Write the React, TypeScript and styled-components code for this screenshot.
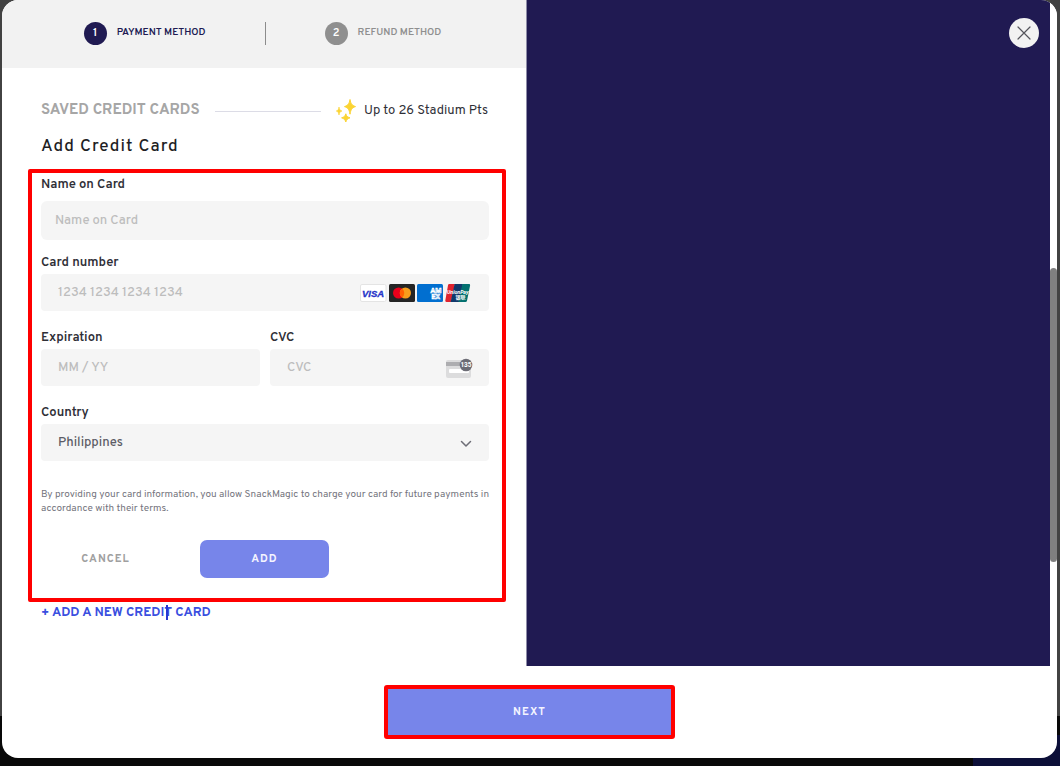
import React from 'react';
import styled, { createGlobalStyle } from 'styled-components';

const navy = '#201a52';
const periwinkle = '#7785ea';
const red = '#ff0000';

const GlobalStyle = createGlobalStyle`
  *, *::before, *::after { box-sizing: border-box; }
  body {
    margin: 0;
    font-family: Overpass, Roboto, 'Liberation Sans', sans-serif;
    color: #2f2f37;
  }
  button, input, select { font: inherit; color: inherit; }
`;

const Backdrop = styled.div`
  min-height: 100vh;
  display: flex;
  padding: 0 3px 8px 2px;
  background:
    linear-gradient(#0c0f38, #0c0f38) right bottom / 87px 31px no-repeat,
    linear-gradient(#080808, #080808) left bottom / 100% 50px no-repeat,
    #424242;
`;

const Modal = styled.main`
  flex: 1;
  display: flex;
  flex-direction: column;
  border-radius: 16px;
  overflow: hidden;
  background: #fff;
`;

const Body = styled.div`
  flex: 1;
  display: grid;
  grid-template-columns: minmax(0, 1fr) minmax(0, 1fr) 7px;
`;

const PaymentColumn = styled.section`
  display: flex;
  flex-direction: column;
`;

const Steps = styled.ol`
  list-style: none;
  margin: 0;
  padding: 0 3px 2px 0;
  height: 68px;
  display: flex;
  align-items: center;
  justify-content: center;
  gap: 59px;
  background: #f2f2f2;
`;

const Step = styled.li<{ $active?: boolean }>`
  display: flex;
  align-items: center;
  gap: 10px;
  font-size: 10px;
  font-weight: 600;
  line-height: 16px;
  white-space: nowrap;
  color: ${(p) => (p.$active ? navy : '#8f8f8f')};
`;

const StepNumber = styled.span<{ $active?: boolean }>`
  width: 23px;
  height: 23px;
  border-radius: 50%;
  display: grid;
  place-items: center;
  font-size: 11px;
  color: #fff;
  background: ${(p) => (p.$active ? navy : '#8f8f8f')};
`;

const StepDivider = styled.li`
  width: 1px;
  height: 23px;
  background: #8c8c8c;
`;

const Content = styled.div`
  padding: 33px 20px 0 26px;
`;

const SavedRow = styled.div`
  display: flex;
  align-items: center;
  padding: 0 18px 0 13px;
  height: 20px;
`;

const SavedTitle = styled.h2`
  margin: 0;
  font-size: 15px;
  line-height: 20px;
  font-weight: 700;
  color: #a6a6a6;
`;

const Rule = styled.span`
  flex: 1;
  height: 1px;
  margin: 0 15px;
  background: #dcdce6;
`;

const Points = styled.span`
  display: flex;
  align-items: center;
  gap: 8px;
  font-size: 13px;
  line-height: 20px;
`;

const FormTitle = styled.h1`
  margin: 15px 0 0;
  padding: 0 13px;
  font-size: 17px;
  line-height: 22px;
  font-weight: 500;
  letter-spacing: 1px;
  color: #1e1e24;
`;

const CardForm = styled.form`
  margin-top: 11px;
  padding: 4px 13px 20px 9px;
  border: 4px solid ${red};
  border-radius: 2px;
`;

const Field = styled.div<{ $gap?: number }>`
  display: flex;
  flex-direction: column;
  gap: ${(p) => p.$gap ?? 3}px;
  flex: 1;
  min-width: 0;
`;

const Label = styled.label`
  font-size: 13px;
  line-height: 16px;
  font-weight: 600;
`;

const Row = styled.div`
  display: flex;
  gap: 10px;
  margin-top: 19px;
`;

const FirstRow = styled(Row)`
  margin-top: 15px;
`;

const Control = styled.div<{ $tall?: boolean }>`
  position: relative;
  display: flex;
  align-items: center;
  height: ${(p) => (p.$tall ? 39 : 37)}px;
  padding: 0 18px 0 ${(p) => (p.$tall ? 14 : 17)}px;
  border-radius: ${(p) => (p.$tall ? 6 : 4)}px;
  background: #f5f5f5;
`;

const TextInput = styled.input`
  flex: 1;
  min-width: 0;
  height: 100%;
  padding: 0;
  border: 0;
  outline: 0;
  background: none;
  font-size: 13px;
  font-weight: 500;
  &::placeholder { color: #bdbdbd; opacity: 1; }
`;

const CountrySelect = styled.select`
  flex: 1;
  height: 100%;
  padding: 0;
  border: 0;
  outline: 0;
  appearance: none;
  background: none;
  font-size: 13px;
  font-weight: 500;
  color: #5c5c66;
`;

const Brands = styled.span`
  display: flex;
  gap: 2px;
`;

const Terms = styled.p`
  margin: 27px 0 0;
  font-size: 10px;
  line-height: 14px;
  color: #75757e;
`;

const Actions = styled.div`
  display: flex;
  gap: 30px;
  margin-top: 24px;
`;

const Button = styled.button<{ $primary?: boolean }>`
  width: 129px;
  height: 38px;
  border: 0;
  border-radius: 7px;
  padding: 0;
  font-size: 11px;
  font-weight: 700;
  letter-spacing: 1px;
  color: ${(p) => (p.$primary ? '#f4f4ff' : '#a0a0a0')};
  background: ${(p) => (p.$primary ? periwinkle : 'none')};
`;

const AddCardLink = styled.a`
  position: relative;
  display: inline-block;
  margin: 0 0 0 13px;
  font-size: 13px;
  line-height: 18px;
  font-weight: 700;
  color: #3a4fdf;
  text-decoration: none;
`;

const Caret = styled.span`
  position: absolute;
  left: 125px;
  top: 1px;
  width: 2px;
  height: 15px;
  background: #2638d2;
`;

const SidePanel = styled.aside`
  display: flex;
  justify-content: flex-end;
  align-items: flex-start;
  padding: 18px 11px;
  border-left: 1px solid #8e8ca8;
  background: ${navy};
`;

const CloseButton = styled.button`
  width: 30px;
  height: 30px;
  padding: 0;
  border: 0;
  border-radius: 50%;
  display: grid;
  place-items: center;
  background: #f2f2f2;
`;

const ScrollTrack = styled.div`
  display: flex;
  flex-direction: column;
  background: #fff;
  &::before { content: ''; flex: 268; }
  &::after { content: ''; flex: 104; }
`;

const ScrollThumb = styled.div`
  flex: 294;
  border-radius: 4px;
  background: #808080;
`;

const Footer = styled.footer`
  height: 92px;
  display: flex;
  justify-content: center;
  align-items: center;
`;

const NextButton = styled(Button)`
  width: 291px;
  height: 54px;
  border: 4px solid ${red};
  border-radius: 3px;
`;

const Sparkles = () => (
  <svg width="20" height="24" viewBox="0 0 20 24" fill="#fbd433" stroke="#fbd433" aria-hidden="true">
    <path d="M14 0.500C14.800 4.600 15.600 6.200 19.500 7.600C15.600 9 14.800 10.800 14 15.200C13.200 10.800 12.400 9 8.500 7.600C12.400 6.200 13.200 4.600 14 0.500Z" />
    <path d="M3 8C3.500 10.600 4 11.400 6 12C4 12.600 3.500 13.600 3 16C2.500 13.600 2 12.600 0.300 12C2 11.400 2.500 10.600 3 8Z" strokeWidth="0.600" />
    <path d="M9.800 14.800C10.500 17.300 11.400 18 14 18.800C11.400 19.800 10.500 20.600 9.800 23C9 20.600 8.200 19.800 5.600 18.800C8.200 18 9 17.300 9.800 14.800Z" />
  </svg>
);

const Visa = () => (
  <svg width="27" height="18" viewBox="0 0 27 18" role="img" aria-label="Visa">
    <rect x="0.5" y="0.5" width="25.5" height="17" rx="1.5" fill="#fff" stroke="#e4e4e4" />
    <text x="13" y="12.500" textAnchor="middle" fontFamily="Liberation Sans, sans-serif" fontSize="9.500" fontWeight="700" fontStyle="italic" fill="#2533c8" stroke="#2533c8" strokeWidth="0.300">VISA</text>
  </svg>
);

const Mastercard = () => (
  <svg width="26" height="18" viewBox="0 0 26 18" role="img" aria-label="Mastercard">
    <rect width="26" height="18" rx="1.5" fill="#252525" />
    <circle cx="9.6" cy="9" r="5.6" fill="#eb001b" />
    <circle cx="16.4" cy="9" r="5.6" fill="#f79e1b" />
    <path d="M13 4.5a5.6 5.6 0 0 1 0 9a5.6 5.6 0 0 1 0-9Z" fill="#ff5f00" />
  </svg>
);

const Amex = () => (
  <svg width="26" height="18" viewBox="0 0 26 18" role="img" aria-label="American Express">
    <rect width="26" height="18" rx="1.5" fill="#016fd0" />
    <g fontFamily="Roboto, sans-serif" fontWeight="700" fontSize="7" fill="#016fd0" stroke="#fff" strokeWidth="0.7">
      <text x="13.500" y="8.500">AM</text>
      <text x="14.500" y="14.500">EX</text>
    </g>
  </svg>
);

const UnionPay = () => (
  <svg width="26" height="18" viewBox="0 0 26 18" role="img" aria-label="UnionPay">
    <path d="M4.2 0H10L6 18H1.4Q0 18 .3 16.6L3 1.2Q3.200 0 4.200 0Z" fill="#e0232f" />
    <path d="M9.600 0H18L14 18H5.600Z" fill="#12396b" />
    <path d="M17.400 0H24Q25.400 0 25.100 1.400L22 16.800Q21.700 18 20.500 18H13.400Z" fill="#03706f" />
    <text x="12.800" y="9.500" textAnchor="middle" fontFamily="Roboto, sans-serif" fontSize="5.200" fontWeight="700" fontStyle="italic" fill="#fff">UnionPay</text>
    <text x="15.500" y="14.500" textAnchor="middle" fontFamily="Noto Sans CJK SC, sans-serif" fontSize="5" fontWeight="700" fill="#fff">银联</text>
  </svg>
);

const CvcIcon = styled.svg`
  overflow: visible;
`;

const CvcCard = () => (
  <CvcIcon width="25" height="20" viewBox="0 0 25 20" aria-hidden="true">
    <rect y="2" width="25" height="18" rx="2" fill="#dcdcdd" />
    <rect y="4" width="25" height="4" fill="#adadb0" />
    <rect x="3" y="11" width="20" height="4" rx="1" fill="#fff" />
    <circle cx="20" cy="7" r="6.300" fill="#6c6c75" />
    <text x="20" y="9.300" textAnchor="middle" fontFamily="Roboto, sans-serif" fontSize="6.500" fontWeight="700" fill="#fff">135</text>
  </CvcIcon>
);

const Chevron = styled.svg`
  position: absolute;
  right: 17px;
  top: 16px;
  pointer-events: none;
`;

export default function App() {
  return (
    <>
      <GlobalStyle />
      <Backdrop>
        <Modal>
          <Body>
            <PaymentColumn>
              <Steps>
                <Step $active>
                  <StepNumber $active>1</StepNumber>PAYMENT METHOD
                </Step>
                <StepDivider aria-hidden="true" />
                <Step>
                  <StepNumber>2</StepNumber>REFUND METHOD
                </Step>
              </Steps>
              <Content>
                <SavedRow>
                  <SavedTitle>SAVED CREDIT CARDS</SavedTitle>
                  <Rule />
                  <Points><Sparkles />Up to 26 Stadium Pts</Points>
                </SavedRow>
                <FormTitle>Add Credit Card</FormTitle>
                <CardForm onSubmit={(e) => e.preventDefault()}>
                  <Field $gap={8}>
                    <Label htmlFor="name">Name on Card</Label>
                    <Control $tall><TextInput id="name" placeholder="Name on Card" /></Control>
                  </Field>
                  <FirstRow>
                    <Field>
                      <Label htmlFor="number">Card number</Label>
                      <Control>
                        <TextInput id="number" placeholder="1234 1234 1234 1234" />
                        <Brands><Visa /><Mastercard /><Amex /><UnionPay /></Brands>
                      </Control>
                    </Field>
                  </FirstRow>
                  <Row>
                    <Field>
                      <Label htmlFor="expiry">Expiration</Label>
                      <Control><TextInput id="expiry" placeholder="MM / YY" /></Control>
                    </Field>
                    <Field>
                      <Label htmlFor="cvc">CVC</Label>
                      <Control><TextInput id="cvc" placeholder="CVC" /><CvcCard /></Control>
                    </Field>
                  </Row>
                  <Row>
                    <Field>
                      <Label htmlFor="country">Country</Label>
                      <Control>
                        <CountrySelect id="country" defaultValue="PH">
                          <option value="PH">Philippines</option>
                        </CountrySelect>
                        <Chevron width="12" height="8" viewBox="0 0 12 8" fill="none" stroke="#6d6d76" strokeWidth="1.500" strokeLinecap="round" strokeLinejoin="round" aria-hidden="true">
                          <path d="M1.500 1.500L6 6L10.500 1.500" />
                        </Chevron>
                      </Control>
                    </Field>
                  </Row>
                  <Terms>
                    By providing your card information, you allow SnackMagic to charge your card for future payments in accordance with their terms.
                  </Terms>
                  <Actions>
                    <Button type="button">CANCEL</Button>
                    <Button type="submit" $primary>ADD</Button>
                  </Actions>
                </CardForm>
                <AddCardLink href="#new-card">+ ADD A NEW CREDIT CARD<Caret /></AddCardLink>
              </Content>
            </PaymentColumn>
            <SidePanel>
              <CloseButton type="button" aria-label="Close">
                <svg width="14" height="14" viewBox="0 0 14 14" stroke="#55555c" strokeWidth="1.200" strokeLinecap="round" aria-hidden="true">
                  <path d="M1 1L13 13M13 1L1 13" />
                </svg>
              </CloseButton>
            </SidePanel>
            <ScrollTrack><ScrollThumb /></ScrollTrack>
          </Body>
          <Footer>
            <NextButton type="button" $primary>NEXT</NextButton>
          </Footer>
        </Modal>
      </Backdrop>
    </>
  );
}
